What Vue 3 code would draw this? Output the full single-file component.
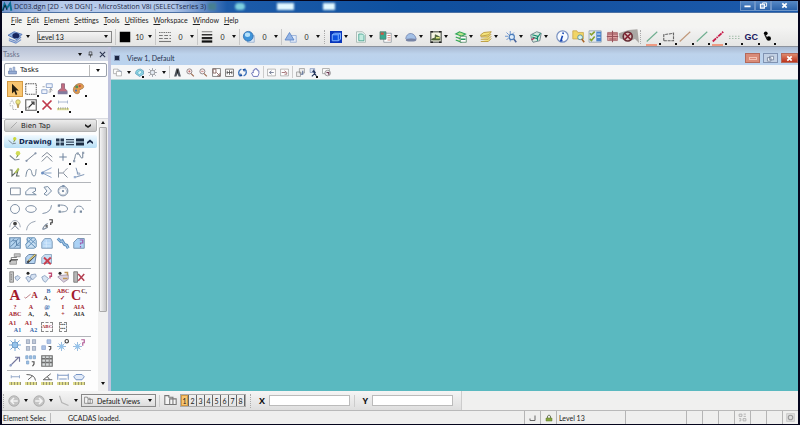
<script setup>
import { ref } from 'vue'

const menus = ['File', 'Edit', 'Element', 'Settings', 'Tools', 'Utilities', 'Workspace', 'Window', 'Help']

const icons = {
  app: '<path d="M1 14 4 3l4 7 5-8 2 12" fill="none" stroke="#0b6f93" stroke-width="3"/><path d="M1 14 5 5l3 8" fill="none" stroke="#123" stroke-width="1.5"/>',
  levels: '<path d="m0 6 7-4 9 3-6 6z" fill="#8fb2e4" stroke="#4b6cae"/><path d="m1 10 8 3 6-5M1 12l8 3 6-4" fill="none" stroke="#6f8fca" stroke-width="1.300"/><ellipse cx="9" cy="6.500" rx="4" ry="3" fill="#17255e"/>',
  black: '<path d="M1 1h14v14H1z" fill="#000"/>',
  dashes: '<path d="M0 2h16" stroke="#777" stroke-width="1.5" stroke-dasharray="2 1"/><path d="M0 6h16M0 10h16" stroke="#777" stroke-width="1.5" stroke-dasharray="5 2"/><path d="M0 14h16" stroke="#777" stroke-width="1.5"/>',
  weights: '<path d="M1 1h14" stroke="#555"/><path d="M1 5h14" stroke="#333" stroke-width="2"/><path d="M1 9.500h14" stroke="#222" stroke-width="3"/><path d="M1 14h14" stroke="#111" stroke-width="3"/>',
  sphere: '<path d="M6 6h9v9H6z" fill="#dbe7f5" stroke="#8fa9cb"/><circle cx="7" cy="7" r="6.500" fill="#3f94da" stroke="#2b68a9"/><ellipse cx="6" cy="5" rx="3.500" ry="3" fill="#b5e1fa"/>',
  prism: '<path d="M7 6h8v9H7z" fill="#e2ebf9" stroke="#8ba6d0"/><path d="m0 12 6-10 6 10z" fill="#93b4e6" stroke="#507cc1"/>',
  cube: '<path d="M0 0h16v16H0z" fill="#0835ba"/><path d="M3 5h8v8H3zM3 5l3-2h8v8l-3 2M11 5l3-2" fill="#0d51df" stroke="#83b5ff" stroke-width="1.300"/>',
  refs: '<path d="M2 1h8l4 4v10H2z" fill="#eef7f4" stroke="#9bada8"/><path d="M5 4h5l2 2v7H5z" fill="#c2ebdf" stroke="#389a86"/>',
  raster: '<path d="M5 3h10v12H5z" fill="#fff" stroke="#868f96"/><path d="M0 1h8v10H0z" fill="#3aa98e" stroke="#547b72"/><path d="M1 2h4v3H1z" fill="#d45542"/><path d="M10 6h4M10 9h4M10 12h4" stroke="#c46e5c"/>',
  cloud: '<path d="M1 10c1-8 10-9 13-2l1 3H2z" fill="#a3c0e6" stroke="#6d7fab"/><ellipse cx="8" cy="12" rx="7" ry="2" fill="#7784a5"/>',
  model: '<path d="M1 1h14v14H1z" fill="#f5f5e2" stroke="#777b76" stroke-width="2"/><path d="M1 1h3M12 1h3M1 15h3M12 15h3" stroke="#222" stroke-width="2"/><path d="m2 11 5-2V5l6 3v4H3z" fill="#58733a" stroke="#3a4d2e"/><path d="M8 8h5v2H8z" fill="#dbe582"/>',
  stackgreen: '<path d="m1 4 5-3 8 3-5 3zM1 8l7 3 6-3M1 12l7 3 6-3" fill="#b9e48c" stroke="#2ea55b" stroke-width="1.500"/><path d="M7 7h8v8H7z" fill="#fff" stroke="#447d5a"/><path d="M8 10h6v2H8z" fill="#259b5a"/>',
  stackyellow: '<path d="m1 5 4-3 10-1-3 4-11 2zM1 8h10l4-4M1 11h10l4-4M1 14h10l4-4" fill="#f4e37a" stroke="#b9993d" stroke-width="1.200"/>',
  sunzoom: '<path d="M7 0v4M7 10v4M0 7h4M2 2l3 3M12 2 9 5M2 12l3-3" stroke="#6f96cf" stroke-width="1.300"/><circle cx="9" cy="8" r="3.500" fill="#ddecfb" stroke="#4a7cba" stroke-width="1.500"/><path d="m12 11 3 4" stroke="#47639a" stroke-width="2"/>',
  book: '<path d="m1 5 8-4 6 2-2 10-9 2-2-4z" fill="#d7e9df" stroke="#536e77"/><path d="m3 5 7 2v6M3 8l6 2 5-7" fill="none" stroke="#168b6e" stroke-width="1.500"/><path d="m2 12 4-3" stroke="#ae385e" stroke-width="2"/>',
  info: '<circle cx="8" cy="8" r="7" fill="#f8fbff" stroke="#7b93c2" stroke-width="1.500"/><path d="m9 3-.5 2M8 7l-2 6h2" fill="none" stroke="#1644b2" stroke-width="2"/>',
  foldersearch: '<path d="M1 1h5l1 2h7v8H1z" fill="#f1d566" stroke="#c9a750"/><circle cx="10" cy="9" r="3" fill="#d6f0ef" stroke="#4a8b9e"/><path d="m12 11 3 4" stroke="#a96428" stroke-width="2"/>',
  check: '<path d="M0 1h15v14H0z" fill="#e3eaf1" stroke="#93a3b2"/><path d="M9 2h6v12H9z" fill="#4b84cd"/><path d="m1 4 2 2 4-4M1 11l2 2 4-5" fill="none" stroke="#89a231" stroke-width="2"/><path d="M10 5h4M10 9h4" stroke="#fff"/>',
  redplus: '<path d="M2 3h12v10H2z" fill="#dfa3a3" stroke="#a7676d"/><path d="M8 1v14M1 8h14M2 5h12M4 11h9" stroke="#98525b" stroke-width="1.300"/>',
  redx: '<path d="M-4 4 8 0l11-1 2 17-5-5-8 3-11-4z" fill="#aaa7a4"/><circle cx="7" cy="8" r="5.500" fill="#d9c1bd" stroke="#642e36" stroke-width="2"/><path d="m3 4 8 8M11 4l-8 8" stroke="#831f30" stroke-width="2"/>',
  lineg: '<path d="M1 14 15 1" stroke="#6fae90" stroke-width="1.500"/>',
  lineo: '<path d="M1 14 15 1" stroke="#c0987a" stroke-width="1.500"/>',
  quad: '<path d="M1 13V5l13-2v10z" fill="none" stroke="#666" stroke-width="1.500" stroke-dasharray="4 1"/>',
  linered: '<path d="M1 14 15 1" stroke="#c71e4b" stroke-width="2.500" stroke-dasharray="6 1 2 1"/>',
  dotted: '<path d="M0 7h16M0 10h16" stroke="#a3bda9" stroke-width="1.500" stroke-dasharray="2 2"/>',
  people: '<circle cx="5" cy="3" r="2.500"/><circle cx="9" cy="10" r="3"/><path d="m4 5 3 6" fill="none" stroke="#222" stroke-width="2"/>',
  cascade: '<path d="M1 2h8v8H1z" fill="#fff" stroke="#888"/><path d="M6 6h9v8H6z" fill="#fff" stroke="#888"/><path d="m10 3 5 4" stroke="#597aad"/>',
  globe: '<path d="M1 10c0-6 4-8 9-8l5 3v6l-7 4z" fill="#8fdbe8" stroke="#38779e"/><path d="m4 9 5-5 4 3-5 5z" fill="#d6f5f8" stroke="#3c91b0"/>',
  bright: '<path d="M8 0v16M0 8h16M2 2l12 12M14 2 2 14" stroke="#68717e"/><circle cx="8" cy="8" r="4" fill="#e4ebf3" stroke="#666"/>',
  brush: '<path d="M6 1h4l4 14h-4l-2-5-2 5H2z" fill="#4d535b"/><path d="M8 3v6" stroke="#222" stroke-width="2"/>',
  zoomin: '<circle cx="6" cy="6" r="4.500" fill="#f7efef" stroke="#857a7d" stroke-width="1.500"/><path d="M6 4v4M4 6h4" stroke="#a33c3c"/><path d="m9 10 5 5" stroke="#9b684c" stroke-width="2"/>',
  zoomout: '<circle cx="6" cy="6" r="4.500" fill="#f7efef" stroke="#857a7d" stroke-width="1.500"/><path d="M4 6h4" stroke="#a33c3c"/><path d="m9 10 5 5" stroke="#9b684c" stroke-width="2"/>',
  winarea: '<path d="M1 1h14v14H1z" fill="#fff" stroke="#777" stroke-width="1.500"/><path d="M2 2h5v7H2zM8 8l6 6M14 9v5H9" fill="none" stroke="#805d58" stroke-width="1.500"/>',
  fit: '<path d="M1 2h14v13H1z" fill="#fff" stroke="#666" stroke-width="1.500"/><path d="M3 8h10M8 4v8M4 5v6M12 5v6" stroke="#555" stroke-width="1.500"/>',
  rotate: '<path d="M6 2C0 4 0 11 4 14M10 14c6-2 6-9 2-12" fill="none" stroke="#3a73bd" stroke-width="2.500"/><path d="m5 9 3 5-5 1M11 7 8 2l5-1" fill="#164c9d"/>',
  hand: '<path d="M4 15 1 9l2-1 1 1V4h2V2h2V1h2v2h2v2h2v5l-2 5z" fill="#fff" stroke="#5c66b1" stroke-width="1.500"/>',
  prev: '<path d="M1 2h14v12H1z" fill="#fff" stroke="#888"/><path d="M12 8H5m3-3L4 8l4 3" fill="none" stroke="#6b7690" stroke-width="1.500"/>',
  next: '<path d="M1 2h14v12H1z" fill="#fff" stroke="#888"/><path d="M3 8h7M8 5l4 3v3H8" fill="none" stroke="#9b6568" stroke-width="1.500"/>',
  copyview: '<path d="M6 1h9v8H6zM1 7h7v8H1z" fill="#eee" stroke="#777"/><path d="M8 11h4V5" fill="none" stroke="#60729a" stroke-width="2"/>',
  walk: '<path d="M2 1h8v7H2z" fill="#dce5f5" stroke="#687fab"/><path d="m8 3 2 7-5 5M9 8l4 6M6 6l6 2" fill="none" stroke="#24375d" stroke-width="2"/>',
  clip: '<path d="M1 1h12v9H1z" fill="#fff" stroke="#777"/><circle cx="10" cy="9" r="5" fill="#ece6eb" stroke="#666"/><path d="M8 8h4v4" fill="none" stroke="#6a3650" stroke-width="2"/>',
  taskicon: '<path d="M1 9h14v5H1z" fill="#96add5" stroke="#4e679b"/><path d="M3 9V4h3v5M9 9V2h3v7" fill="#b9cbe8" stroke="#637dad"/>',
  cursor: '<path d="m4 1 9 9H9l2 5-2 1-2-5-3 3z" fill="#000"/>',
  fence: '<path d="M1 1h14v14H1z" fill="none" stroke="#333" stroke-width="1.300" stroke-dasharray="2 1"/>',
  manip: '<path d="M7 1h8v5H7zM1 9h7v5H1z" fill="#eef3fc" stroke="#6282b8"/><path d="M10 12h3V8m-2 2 2-3 2 3" fill="none" stroke="#777"/><path d="M2 5h3" stroke="#777"/>',
  stamp: '<path d="M6 1h4v6l3 3v4H2v-4l4-3z" fill="#b9546a" stroke="#743c59"/><path d="M1 11h13v4H1z" fill="#6d668e"/>',
  palette: '<path d="M7 1c7-2 10 6 4 7l-3 2c2 3-1 5-4 4C-2 12 0 3 7 1z" fill="#d98b31" stroke="#965726"/><circle cx="5" cy="5" r="2" fill="#387f3e"/><circle cx="9" cy="4" r="1.500" fill="#be2525"/><circle cx="4" cy="10" r="1.500" fill="#315cae"/>',
  modify: '<path d="m1 7 3-6 3 6M1 9h4v5h6" fill="none" stroke="#888" stroke-dasharray="2 1"/><path d="m10 6 1 6h2l1-6" fill="#ae8b42"/><circle cx="12" cy="4" r="3" fill="#ebe36d" stroke="#a4943a"/>',
  scale: '<path d="M1 1h14v14H1z" fill="#fff" stroke="#444" stroke-width="1.500"/><path d="m5 11 6-6M8 4h4v4" fill="none" stroke="#111" stroke-width="1.500"/><path d="M2 14v-3h3v3" fill="none" stroke="#777"/>',
  delete: '<path d="m2 2 12 12M14 2 2 14" stroke="#b5172d" stroke-width="2.300"/>',
  measure: '<path d="M2 4h12M2 2v4M14 2v4" stroke="#8297bb"/><path d="M0 12h16v3H0z" fill="#dedf8a"/><path d="M2 11v3M5 11v3M8 11v3M11 11v3M14 11v3" stroke="#777"/>',
  pen: '<path d="m14 2-11 11" stroke="#888"/>',
  smartline: '<path d="m1 6 7 6 6-1" fill="none" stroke="#687383" stroke-width="1.500"/><path d="m9 10 2-5 2 1z" fill="#59732c"/><circle cx="12" cy="3" r="3" fill="#cbd73a"/>',
  line: '<path d="M2 13 14 3" stroke="#627085" stroke-width="1.300"/><circle cx="2" cy="13" r="1.500" fill="#71829c"/><circle cx="14" cy="3" r="1.500" fill="#71829c"/>',
  multi: '<path d="m1 8 7-6 7 6M1 14l7-7 7 7" fill="none" stroke="#687383" stroke-width="1.300"/>',
  point: '<path d="M8 3v10M3 8h10" stroke="#536b8b" stroke-width="1.300"/>',
  curve: '<path d="M1 13C4 8 2 3 6 3s3 8 7 6V2" fill="none" stroke="#536982" stroke-width="1.300"/><path d="M0 12h3v3H0zM5 2h3v3H5zM12 1h3v3h-3z" fill="#8292a6"/>',
  freehand: '<path d="M1 4h3v8l8-8-2 8h4" fill="none" stroke="#3f4942" stroke-width="1.500"/><path d="m7 8 5-7 2 2-4 5z" fill="#a1b839"/>',
  wave: '<path d="M1 13C2 9 2 3 6 3s2 9 6 9c3 0 2-6 3-9" fill="none" stroke="#566d85" stroke-width="1.300"/>',
  bisect: '<path d="M2 7 14 1M2 8h12M2 8l12 6" fill="none" stroke="#7695be" stroke-width="1.300"/><circle cx="2" cy="8" r="2" fill="#567eb7"/>',
  minimum: '<path d="M2 2v12M2 8h6M14 2C10 5 8 7 9 9l5 5" fill="none" stroke="#6d7889" stroke-width="1.300"/>',
  perpendicular: '<path d="m4 1 3 10M2 14l13-4" stroke="#6682a7" stroke-width="1.300"/><path d="M5 8h4v3" fill="none" stroke="#6682a7"/><path d="M1 12h3v3H1z" fill="#8ca5cb"/>',
  rect: '<path d="M2 4h13v9H2z" fill="none" stroke="#69798e" stroke-width="1.300"/>',
  shape: '<path d="M1 13V9l5-5h8v4l-4 2 5 3z" fill="#f5f8fc" stroke="#607792" stroke-width="1.300"/>',
  ortho: '<path d="m4 3 5-1 5 6-6 6-4-2 4-4z" fill="#f3f7fb" stroke="#607792" stroke-width="1.300"/>',
  polygon: '<circle cx="8" cy="8" r="6.500" fill="none" stroke="#59718e" stroke-width="1.300"/><path d="M5 4h6l2 4-2 5H5L2 8z" fill="none" stroke="#9aaabd"/><circle cx="8" cy="8" r="1.500" fill="#59718e"/><path d="M7 0h3v3H7z" fill="#6a82a0"/>',
  circle: '<circle cx="8" cy="8" r="6" fill="none" stroke="#687b94" stroke-width="1.300"/>',
  ellipse: '<ellipse cx="8" cy="8" rx="7" ry="4.500" fill="none" stroke="#687b94" stroke-width="1.300"/>',
  arc: '<path d="M2 14Q13 13 14 3" fill="none" stroke="#687b94" stroke-width="1.300"/>',
  half: '<path d="M2 3c7-1 12 1 12 5 0 3-4 4-10 4" fill="none" stroke="#647890" stroke-width="1.300"/><path d="M1 2h3v3H1zM2 10h3v3H2z" fill="#647890"/>',
  arc2: '<path d="M2 12C2 2 12 2 14 9" fill="none" stroke="#647890" stroke-width="1.300"/><circle cx="2" cy="12" r="1.500" fill="#7e90a7"/><path d="M9 10h3v3H9z" fill="#647890"/>',
  arcmod: '<path d="M1 11C2-1 14-1 15 11" fill="none" stroke="#8490a2" stroke-width="1.200"/><path d="m3 14 5-5 5 5" fill="none" stroke="#526177" stroke-width="1.300"/><circle cx="8" cy="6" r="2.500" fill="#222"/>',
  arc3: '<path d="M2 15Q3 5 14 3" fill="none" stroke="#8793a3" stroke-width="1.300"/>',
  arcaxis: '<path d="M2 14Q4 8 9 6M3 14l6-3" fill="none" stroke="#67778d" stroke-width="1.500"/><path d="M6 8h3v3H6z" fill="#555"/><path d="M11 1h4v4h-2v3" fill="none" stroke="#222" stroke-width="1.600"/>',
  hatch: '<path d="M1 1h14v14H1z" fill="#a8ccec" stroke="#4d769f" stroke-width="1.500"/><path d="m2 13 11-11M2 7l5-5M7 14l7-7M5 5h5v6h4" fill="none" stroke="#42719f" stroke-width="1.300"/>',
  crosshatch: '<path d="M3 1h10l2 4v8l-3 2H2l-1-5 2-3z" fill="#c0dcf2" stroke="#5584ad" stroke-width="1.300"/><path d="m2 3 12 11M5 1l9 8M1 10 10 1M3 14 14 3" stroke="#447aae" stroke-width="1.300"/>',
  pattern: '<path d="M1 15V7l4-5h8l2 4v9z" fill="#a9d0f4" stroke="#7190b0" stroke-width="1.300"/><path d="M3 12h10M4 8h9M7 4v10" stroke="#d7ecff"/>',
  linear: '<path d="m1 2 4 4 2-1 3 5 3 1 2 4" fill="none" stroke="#447fb8" stroke-width="4"/><path d="m1 2 4 4 2-1 3 5 3 1 2 4" fill="none" stroke="#c2e0f5"/>',
  matchpat: '<path d="M1 15V7l5-5h9v13z" fill="#9dcbf4" stroke="#6384a5" stroke-width="1.300"/><path d="M9 4h4v4h-3v2M10 12v2" fill="none" stroke="#8e3c9b" stroke-width="1.600"/>',
  changepat: '<path d="M1 10h9v5H1zM7 1h8v4H7z" fill="#bdbdbd" stroke="#777"/><path d="M3 9V6h7V5" fill="none" stroke="#444"/><path d="M1 12 3 9h9" fill="none" stroke="#111" stroke-width="1.500"/>',
  editpat: '<path d="M1 14V6l4-4h10l-2 12z" fill="#a9cdf0" stroke="#4d6d94" stroke-width="1.300"/><path d="M3 13 14 2" stroke="#222" stroke-width="3"/><path d="m5 10 9-8" stroke="#e8d36c" stroke-width="1.500"/>',
  delpat: '<path d="M1 14V6l4-4h9v12z" fill="#bddaf3" stroke="#6485a7"/><path d="m4 6 9 9M13 6 4 15" stroke="#c01f31" stroke-width="2.500"/>',
  tags: '<path d="M1 1h5v14H1z" fill="#b9b9b9" stroke="#5d5d5d"/><path d="M3 4v9" stroke="#555" stroke-dasharray="2 1"/><path d="m8 8 4-2 3 3-4 4-2-2z" fill="#cad9ed" stroke="#6680a6"/>',
  attach: '<path d="m1 9 3-2 5 3-4 5zM8 5l6-1 1 3-5 5-3-3z" fill="#cfddf0" stroke="#6480a8"/><circle cx="4" cy="3" r="2"/>',
  tagq: '<path d="m1 8 4-2 5 4-4 5-3-2z" fill="#d2e1f2" stroke="#6480a8"/><path d="M10 3h4v4h-2v3" fill="none" stroke="#b42d5c" stroke-width="1.700"/>',
  tagmod: '<path d="m1 8 3-2 11-1v6l-6 4z" fill="#d3cad9" stroke="#85728f"/><circle cx="4" cy="3" r="2"/><path d="M10 2h4v4M8 10h6" fill="none" stroke="#b5833f" stroke-width="2"/>',
  tagdel: '<path d="M1 1h5v14H1z" fill="#aaa" stroke="#4d4d4d"/><path d="m7 4 8 9M15 4 7 13" stroke="#a71f35" stroke-width="2"/>',
  note: '<path d="m1 12 3 2 11-9" fill="none" stroke="#8b2330" stroke-width="1.500"/>',
  star: '<path d="M8 0v16M0 8h16M2 2l12 12M14 2 2 14" stroke="#6099d0" stroke-width="1.300"/><circle cx="8" cy="8" r="4" fill="#83b9e8" stroke="#457eb5"/>',
  cells: '<path d="M2 1h4v5H2zM10 1h4v5h-4zM2 10h4v5H2zM10 10h4v5h-4z" fill="#b8c2d3" stroke="#97a4bb" stroke-width="1.500"/>',
  cellpick: '<path d="M8 1h5v5H8zM1 9h5v5H1z" fill="#9eb9e3" stroke="#7c99ca"/><path d="M10 10h3v3l-2 2" fill="none" stroke="#333" stroke-width="1.600"/>',
  starzero: '<path d="M6 4v12M0 10h12M2 6l8 8M10 6l-8 8" stroke="#6299ce"/><circle cx="6" cy="10" r="3" fill="#83b9e8"/><circle cx="13" cy="3" r="2.300" fill="none" stroke="#222" stroke-width="1.500"/>',
  starq: '<path d="M6 4v12M0 10h12M2 6l8 8M10 6l-8 8" stroke="#6299ce"/><circle cx="6" cy="10" r="3" fill="#83b9e8"/><path d="M11 1h4v4h-2v4" fill="none" stroke="#a44186" stroke-width="1.600"/>',
  arrow: '<path d="M1 15 13 3M8 3h6v6" fill="none" stroke="#5c5f8c" stroke-width="1.500"/><path d="M1 12h3v3H1z" fill="#7d8fbd"/>',
  cellmulti: '<path d="M1 1h3v4H1zM6 1h3v4H6zM11 1h3v4h-3zM2 8h3v4H2z" fill="#88b6e3" stroke="#6b94c2"/><path d="M9 9h3v3l-2 3" fill="none" stroke="#333" stroke-width="1.600"/>',
  table: '<path d="M1 1h14v14H1z" fill="#d3d8d9" stroke="#555" stroke-width="1.500"/><path d="M1 5h14M1 10h14" stroke="#555" stroke-width="2"/><path d="M6 1v14M11 1v14" stroke="#777" stroke-width="1.500"/>',
  mdist: '<path d="M3 5h11M3 3v4M14 3v4" stroke="#8299bf" stroke-width="1.300"/>',
  mrad: '<path d="M2 2q11 0 12 8M4 9l6-5" fill="none" stroke="#444" stroke-width="1.300"/>',
  mang: '<path d="M13 1 3 9h12M8 5q3 1 3 4" fill="none" stroke="#444" stroke-width="1.300"/>',
  mlen: '<path d="M1 1v8M15 1v8M1 3h14M3 8h10" stroke="#6585b9" stroke-width="1.300"/>',
  marea: '<path d="M4 2h8l3 3-3 4H4L1 5z" fill="#dfe9f8" stroke="#5b7fb9" stroke-width="1.300"/>',
  back: '<circle cx="8" cy="8" r="7" fill="#c4c4c4" stroke="#a3a3a3"/><path d="M13 8H4m4-4L4 8l4 4" fill="none" stroke="#f4f4f4" stroke-width="2"/>',
  forward: '<circle cx="8" cy="8" r="7" fill="#c4c4c4" stroke="#a3a3a3"/><path d="M3 8h9M8 4l4 4-4 4" fill="none" stroke="#f4f4f4" stroke-width="2"/>',
  polyline: '<path d="m2 1 3 9 9 4" fill="none" stroke="#b4b4b4" stroke-width="1.500"/>',
  viewgroup: '<path d="M1 2h5v2h5v9H1zM7 6h8v7H7z" fill="#f5f5f5" stroke="#777" stroke-width="1.300"/>',
  snap: '<path d="M2 13h10V3M2 9v4" fill="none" stroke="#666" stroke-width="2"/>',
  lock: '<path d="M5 8V4q3-4 6 0v4" fill="none" stroke="#757d66" stroke-width="2"/><path d="M2 8h12v6H2z" fill="#85a73f" stroke="#5d712f"/>',
  grid: '<path d="M2 2h5v4H2zM10 2h4M10 6h4M2 10h3v4H2M9 10h5v4H9z" fill="none" stroke="#aaa" stroke-width="1.500"/>',
  globebox: '<path d="M1 1h14v14H1z" fill="#ddd" stroke="#bbb"/><circle cx="8" cy="8" r="4" fill="none" stroke="#999" stroke-width="2"/>',
  pin: '<path d="M5 2h6v7H5zM3 9h10M8 9v6" fill="none" stroke="#333" stroke-width="1.500"/>',
  x: '<path d="m2 2 12 12M14 2 2 14" stroke="#2c3550" stroke-width="2.500"/>',
  xw: '<path d="m3 3 10 10M13 3 3 13" stroke="#fff" stroke-width="4"/>',
  min: '<path d="M1 10h14" stroke="#fff" stroke-width="4"/>',
  restore: '<path d="M6 2h9v8H6z" fill="none" stroke="#fff" stroke-width="2"/><path d="M1 5h9v9H1z" fill="#82a6d2" stroke="#fff" stroke-width="2.500"/>',
  viewrestore: '<path d="M6 3h9v8H6zM1 6h8v8H1z" fill="#eef3f9" stroke="#5e6d88" stroke-width="1.500"/>',
  chevdown: '<path d="m2 4 6 4 6-4v4l-6 4-6-4z" fill="#222"/>',
  chevup: '<path d="m2 12 6-4 6 4V8L8 3 2 8z" fill="#152544"/>',
  lay1: '<path d="M0 1h7v6H0zM9 1h7v6H9zM0 9h7v6H0zM9 9h7v6H9z" fill="#263850"/>',
  lay2: '<path d="M0 3h16M0 8h16M0 13h16" stroke="#34465c" stroke-width="2.500"/>',
  lay3: '<path d="M0 1h16v6H0zM0 9h16v6H0z" fill="#1a2c43"/>',
}

const attributes = [
  { icon: 'black', value: '10', label: 'Active color' },
  { icon: 'dashes', value: '0', label: 'Active line style' },
  { icon: 'weights', value: '0', label: 'Active line weight' },
  { icon: 'sphere', value: '0', label: 'Active transparency' },
  { icon: 'prism', value: '0', label: 'Active priority' },
]
const primary = ['cube', 'refs', 'raster', 'cloud', 'model', 'stackgreen', 'stackyellow', 'sunzoom', 'book']
const secondary = ['info', 'foldersearch', 'check', 'redplus', 'redx']
const gcadas = [
  { icon: 'lineg', hot: true }, { icon: 'quad' }, { icon: 'lineo' }, { icon: 'lineg' },
  { icon: 'linered', hot: true }, { icon: 'dotted' }, { text: 'GC' }, { icon: 'people' },
]
const viewTools = [
  ['cascade', 'drop'], ['globe', 'corner'], ['bright', 'drop'], ['|'],
  ['brush'], ['zoomin'], ['zoomout'], ['winarea'], ['fit'], ['rotate'], ['hand'], ['|'],
  ['prev'], ['next'], ['|'], ['copyview'], ['walk', 'corner'], ['clip'],
]
const mainTools = [
  'cursor', 'fence', 'manip', 'stamp', 'palette',
  'modify', 'scale', 'delete', 'measure',
]
const plainMain = ['cursor', 'delete']

// A tool is either an icon name or a short piece of lettering: [top line, bottom line, style].
const groups = [
  ['smartline', 'line', 'multi', 'point', 'curve', 'freehand', 'wave', 'bisect', 'minimum', 'perpendicular'],
  ['rect', 'shape', 'ortho', 'polygon'],
  ['circle', 'ellipse', 'arc', 'half', 'arc2', 'arcmod', 'arc3', 'arcaxis'],
  ['hatch', 'crosshatch', 'pattern', 'linear', 'matchpat', 'changepat', 'editpat', 'delpat'],
  ['tags', 'attach', 'tagq', 'tagmod', 'tagdel'],
  [
    ['A', '', 'big'], ['', 'A', 'note'], ['B', 'A ,', 'blue'], ['ABC', '✓', 'red'], ['C', 'C,', 'big pair'],
    ['?', 'ABC', 'red'], ['A', 'A,', 'mix'], ['@', 'A,', 'blue'], ['I', '+', 'red'], ['AIA', 'AIA', 'mix'],
    ['A1', 'A1', 'step'], ['A1', 'A2', 'step'], ['ABC', '', 'field'], ['▪▪▪', '▪▪▪', 'field dark'],
  ],
  ['star', 'cells', 'cellpick', 'starzero', 'starq', 'arrow', 'cellmulti', 'table'],
  ['mdist', 'mrad', 'mang', 'mlen', 'marea'],
]
const cornered = ['point', 'curve']
const activeView = ref(1)
const x = ref('')
const y = ref('')
const cells = ['', '', '', 'grid', '', '', 'globebox']
</script>

<template>
  <div class="app">
    <header class="title">
      <svg class="ico s10" viewBox="0 0 16 16" v-html="icons.app" />
      <h1>DC03.dgn [2D - V8 DGN] - MicroStation V8i (SELECTseries 3)</h1>
      <div class="glow"><i class="g1" /><i class="g2" /><i class="g3" /><i class="g4" /></div>
      <div class="winbtns">
        <button v-for="b in ['min', 'restore', 'xw']" :key="b" :aria-label="b">
          <svg class="ico s7" viewBox="0 0 16 16" v-html="icons[b]" />
        </button>
      </div>
    </header>

    <nav class="menu">
      <a v-for="m in menus" :key="m" href="#"><u>{{ m[0] }}</u>{{ m.slice(1) }}</a>
    </nav>

    <div class="toolbar">
      <button class="tool lead" aria-label="Levels"><svg class="ico s14" viewBox="0 0 16 16" v-html="icons.levels" /></button>
      <i class="tri" />
      <div class="combo level">
        <select aria-label="Active level"><option>Level 13</option></select><i class="tri" />
      </div>
      <button v-for="a in attributes" :key="a.icon" class="attr" :aria-label="a.label">
        <svg class="ico s12" viewBox="0 0 16 16" v-html="icons[a.icon]" /><span>{{ a.value }}</span><i class="tri" />
      </button>
      <i class="grip" />
      <button v-for="p in primary" :key="p" class="prim" :aria-label="p">
        <svg class="ico s12" viewBox="0 0 16 16" v-html="icons[p]" /><i class="tri" />
      </button>
      <div class="even five">
        <button v-for="s in secondary" :key="s" class="tool" :aria-label="s">
          <svg class="ico s13" viewBox="0 0 16 16" v-html="icons[s]" />
        </button>
      </div>
      <i class="grip" />
      <div class="even eight">
        <button v-for="(g, i) in gcadas" :key="i" class="tool corner" :class="{ hot: g.hot }" :aria-label="g.icon || g.text">
          <b v-if="g.text" class="gc">{{ g.text }}</b>
          <svg v-else class="ico s12" viewBox="0 0 16 16" v-html="icons[g.icon]" />
        </button>
      </div>
    </div>

    <main class="work">
      <aside class="tasks">
        <div class="tasktitle">
          <span>Tasks</span><i class="tri" />
          <button aria-label="Pin"><svg class="ico s7" viewBox="0 0 16 16" v-html="icons.pin" /></button>
          <button aria-label="Close"><svg class="ico s7" viewBox="0 0 16 16" v-html="icons.x" /></button>
        </div>
        <div class="combo taskcombo">
          <svg class="ico s9" viewBox="0 0 16 16" v-html="icons.taskicon" />
          <select aria-label="Task"><option>Tasks</option></select>
          <i class="split" /><i class="tri" />
        </div>
        <div class="palette main">
          <button v-for="t in mainTools" :key="t" class="tool" :class="{ on: t === 'cursor', corner: !plainMain.includes(t) }" :aria-label="t">
            <svg class="ico s12" viewBox="0 0 16 16" v-html="icons[t]" />
          </button>
        </div>
        <div class="scroller">
          <div class="lists">
            <button class="head"><svg class="ico s9" viewBox="0 0 16 16" v-html="icons.pen" /><span>Bien Tap</span><svg class="ico s8" viewBox="0 0 16 16" v-html="icons.chevdown" /></button>
            <div class="head open">
              <svg class="ico s9" viewBox="0 0 16 16" v-html="icons.smartline" /><span>Drawing</span>
              <button v-for="l in ['lay1', 'lay2', 'lay3', 'chevup']" :key="l" :aria-label="l"><svg class="ico s8" viewBox="0 0 16 16" v-html="icons[l]" /></button>
            </div>
            <div v-for="(g, gi) in groups" :key="gi" class="palette" :class="{ measure: gi === 7 }">
              <button v-for="(t, ti) in g" :key="ti" class="tool" :class="{ corner: cornered.includes(t) }" :aria-label="typeof t === 'string' ? t : 'Text ' + (ti + 1)">
                <svg v-if="typeof t === 'string'" class="ico s12" viewBox="0 0 16 16" v-html="icons[t]" />
                <span v-else class="glyph" :class="t[2]">
                  <svg v-if="t[2] === 'note'" class="ico s7" viewBox="0 0 16 16" v-html="icons.note" />
                  <em v-if="t[0]">{{ t[0] }}</em><em v-if="t[1]">{{ t[1] }}</em>
                </span>
              </button>
            </div>
          </div>
          <div class="scroll"><i class="tri up" /><i class="thumb" /><i class="tri" /></div>
        </div>
      </aside>

      <section class="view">
        <div class="viewtitle">
          <i class="dot" /><h2>View 1, Default</h2>
          <button class="red" aria-label="Minimize view"><i /></button>
          <button aria-label="Restore view"><svg class="ico s7" viewBox="0 0 16 16" v-html="icons.viewrestore" /></button>
          <button class="red strong" aria-label="Close view"><svg class="ico s7" viewBox="0 0 16 16" v-html="icons.xw" /></button>
        </div>
        <div class="viewbar">
          <template v-for="(v, i) in viewTools" :key="i">
            <i v-if="v[0] === '|'" class="sep" />
            <button v-else class="tool" :class="v[1]" :aria-label="v[0]">
              <svg class="ico s9" viewBox="0 0 16 16" v-html="icons[v[0]]" /><i v-if="v[1] === 'drop'" class="tri" />
            </button>
          </template>
        </div>
        <div class="canvas" />
      </section>
    </main>

    <div class="bottom">
      <div class="dock">
        <i class="grip" />
        <button v-for="n in ['back', 'forward', 'polyline']" :key="n" class="nav" :aria-label="n">
          <svg class="ico s12" viewBox="0 0 16 16" v-html="icons[n]" /><i class="tri" />
        </button>
        <div class="combo views">
          <svg class="ico s9" viewBox="0 0 16 16" v-html="icons.viewgroup" />
          <select aria-label="View group"><option>Default Views</option></select><i class="tri" />
        </div>
        <i class="sep" />
        <button class="tool group" aria-label="View groups"><svg class="ico s13" viewBox="0 0 16 16" v-html="icons.viewgroup" /></button>
        <div class="nums">
          <button v-for="n in 8" :key="n" :class="{ on: n === activeView }" @click="activeView = n">{{ n }}</button>
        </div>
        <i class="grip" />
        <label class="coord">X<input v-model="x" type="text"></label>
        <i class="sep" />
        <label class="coord">Y<input v-model="y" type="text"></label>
      </div>
    </div>

    <footer class="status">
      <span class="first">Element Selec</span>
      <span class="msg">GCADAS loaded.</span>
      <span class="cell"><svg class="ico s8" viewBox="0 0 16 16" v-html="icons.snap" /></span>
      <span class="cell"><svg class="ico s8" viewBox="0 0 16 16" v-html="icons.lock" /></span>
      <span class="cell lvl">Level 13</span>
      <span class="cell wide" />
      <span v-for="(c, i) in cells" :key="i" class="cell"><svg v-if="c" class="ico s9" viewBox="0 0 16 16" v-html="icons[c]" /></span>
    </footer>
  </div>
</template>

<style>
html, body { height: 100%; }
body { background: #000; overflow: hidden; }
#app { height: 100%; }
</style>

<style scoped>
* { box-sizing: border-box; }
.app {
  height: 100vh; display: flex; flex-direction: column; border: 1px solid #05051c; border-right-width: 2px; border-left-width: 2px;
  background: #f0f0f0; color: #222; font: 7px/10px Lato, "Open Sans", sans-serif; overflow: hidden;
}
button { border: 0; padding: 0; margin: 0; background: none; font: inherit; color: inherit; display: flex; align-items: center; justify-content: center; }
.ico { display: block; flex: none; overflow: visible; }
.s7 { width: 7px; height: 7px; } .s8 { width: 8px; height: 8px; } .s9 { width: 9px; height: 9px; } .s10 { width: 10px; height: 10px; }
.s12 { width: 12px; height: 12px; } .s13 { width: 13px; height: 13px; } .s14 { width: 14px; height: 14px; }
.tri { flex: none; width: 0; height: 0; border: 2px solid transparent; border-top: 3px solid #111; border-bottom: 0; }
.tri.up { border-top: 0; border-bottom: 3px solid #111; }
.grip { flex: none; width: 1px; height: 14px; border-left: 1px dotted #aaa; }
.sep { flex: none; width: 1px; height: 12px; background: #ccc; }
.tool { position: relative; }
.corner::after { content: ""; position: absolute; right: 0; bottom: 0; width: 2px; height: 2px; background: #111; }

.title { flex: none; height: 12px; display: flex; align-items: center; gap: 2px; background: linear-gradient(90deg, #7796cd 0, #b9cceb 60px, #b3c8e9 170px, #5a85c3 205px, #1d5ba9 225px, #0e51a0 400px, #124f9e 60%, #1c5aab 100%); border-bottom: 1px solid #4c71a4; }
h1 { margin: 0; font: 7px/11px "Open Sans", sans-serif; color: #1c2948; white-space: nowrap; }
.glow { flex: 1; height: 10px; display: flex; align-items: center; }
.glow i { height: 7px; filter: blur(1px); background: #e1f8ff; }
.glow .g1 { width: 8px; background: #467f91; }
.glow .g2 { width: 10px; margin-left: 19px; border-radius: 5px; background: #7ed1df; }
.glow .g3 { width: 17px; margin-left: 32px; }
.glow .g4 { width: 12px; margin-left: 29px; }
.winbtns { display: grid; grid-template-columns: 15px 16px 27px; height: 10px; align-self: flex-start; }
.winbtns button { background: linear-gradient(#5789c5, #2b62a9); border: 1px solid #6d95c8; border-top: 0; }

.menu { flex: none; height: 14px; display: flex; align-items: center; gap: 5px; padding-left: 9px; background: #f4f4f2; }
.menu a { color: #222; text-decoration: none; }
.menu u { text-decoration-thickness: 1px; text-underline-offset: 1px; }

.toolbar { flex: none; height: 20px; display: flex; align-items: center; background: linear-gradient(#f4f4f3, #e5e5e4); border-bottom: 1px solid #8c939e; }
.lead { width: 24px; padding-left: 2px; }
.combo { display: flex; align-items: center; border: 1px solid #888; background: linear-gradient(#f4f4f4, #ddd); padding-right: 3px; }
.combo select { appearance: none; flex: 1; min-width: 0; border: 0; margin: 0; padding: 0; background: none; font: inherit; color: #111; }
.level { width: 75px; height: 12px; margin: 0 3px 0 7px; }
.attr { width: 42px; height: 16px; padding: 0 3px; justify-content: space-between; border-left: 1px solid #c8c8c8; }
.level + .attr { width: 40px; }
.toolbar > .grip { margin: 0 1px; }
.prim { width: 25px; height: 16px; justify-content: space-between; padding: 0 3px 0 4px; }
.even { display: grid; grid-auto-flow: column; grid-auto-columns: 1fr; }
.five { width: 83px; margin: 0 2px 0 3px; } .eight { width: 132px; margin-left: 2px; }
.even .tool { height: 17px; }
.hot::before { content: ""; position: absolute; left: 2px; right: 4px; bottom: -1px; height: 2px; background: #ee9b83; }
.gc { font: bold 9px/12px "Liberation Sans", sans-serif; color: #17175e; }

.work { flex: 1; min-height: 0; display: flex; }
.tasks { flex: none; width: 106px; display: flex; flex-direction: column; background: #fdfdfd; }
.tasktitle { flex: none; height: 14px; display: flex; align-items: center; gap: 5px; padding: 0 2px 0 1px; background: linear-gradient(#b8c2d6, #d6dce8); color: #68718a; }
.tasktitle span { flex: 1; }
.taskcombo { flex: none; height: 14px; margin: 2px 1px 3px 2px; padding: 0 6px 0 3px; gap: 3px; background: #fff; border-color: #9ba1ac; border-radius: 2px; }
.taskcombo, .head { font: 7px/10px "DejaVu Sans", sans-serif; }
.split { width: 1px; height: 11px; margin-right: 3px; background: #bbb; }
.palette { display: grid; grid-template-columns: repeat(5, 16px); grid-auto-rows: 16px; padding-bottom: 1px; border-bottom: 1px solid #b2b5ba; margin: 0 6px 0 3px; }
.palette.main { flex: none; margin: 0 0 0 5px; padding: 1px 0 5px; border: 0; }
.on { background: #f8c570; box-shadow: inset 0 0 0 1px #d39943; }
.scroller { flex: 1; min-height: 0; display: flex; border-top: 1px solid #d9dbe0; }
.lists { flex: 1; min-width: 0; overflow: hidden; padding: 0 1px 0 2px; }
.palette .ico { opacity: .85; }
.head { width: 100%; height: 13px; margin: 0 0 3px; padding: 0 4px; display: flex; align-items: center; gap: 3px; text-align: left; background: linear-gradient(#ececec, #c4c4c4); border: 1px solid #b1b1b1; border-radius: 2px; }
.head span { flex: 1; }
.head.open { margin-bottom: 1px; padding-right: 3px; background: linear-gradient(#f2faff, #b7def5); border: 0; font-weight: bold; color: #10264f; gap: 2px; }
.palette.measure { border: 0; }
.measure .tool::after { content: ""; position: absolute; left: 2px; right: 2px; bottom: 2px; height: 3px; background: repeating-linear-gradient(90deg, #dedb8c 0 2px, #99976f 2px 3px); }
.glyph { display: flex; flex-direction: column; align-items: center; font: bold 6px/7px "Liberation Serif", serif; color: #a31c2d; }
.glyph em { font-style: normal; }
.big { font-size: 15px; line-height: 15px; }
.pair { flex-direction: row; align-items: flex-start; font-size: 14px; }
.pair em:last-child { font-size: 6px; line-height: 7px; color: #5a1d28; }
.note { flex-direction: row; font-size: 9px; }
.blue em:first-child { color: #4470b1; align-self: flex-end; }
.blue em:last-child, .mix em:last-child { color: #333; }
.step em:first-child { align-self: flex-start; }
.step em:last-child { color: #3267aa; padding-left: 5px; }
.field { border: 1px dashed #888; font-size: 5px; line-height: 8px; }
.dark { color: #555; line-height: 4px; }
.scroll { flex: none; width: 10px; display: flex; flex-direction: column; align-items: center; padding: 2px 0 6px; background: #f0f0f0; justify-content: space-between; }
.thumb { width: 8px; height: 70%; margin: 3px 0 auto; border: 1px solid #aaa; border-radius: 1px; background: linear-gradient(90deg, #f4f4f4, #c8c8ca); }

.view { flex: 1; min-width: 0; display: flex; flex-direction: column; border-left: 3px solid #bfc3dd; }
.viewtitle { flex: none; height: 18px; display: flex; align-items: center; gap: 3px; padding: 4px 0 0 3px; background: linear-gradient(#a9b9d1, #bdd3ec 7px, #b9d2ee); }
.dot { width: 6px; height: 6px; margin-right: 4px; border: 1px solid #8a9cbc; background: #1c2743; }
h2 { flex: 1; margin: 0; font: 7px/10px Lato, sans-serif; color: #26324c; }
.viewtitle button { width: 15px; height: 10px; border: 1px solid #8092b1; background: #c3d1e4; }
.viewtitle .red { background: #d98b78; border-color: #b3695a; }
.red i { width: 8px; height: 3px; border: 1px solid #f2c3b5; }
.viewtitle .strong { width: 17px; background: linear-gradient(#e08a6d, #bc321c); }
.viewbar { flex: none; height: 15px; display: flex; align-items: center; gap: 4px; padding: 0 2px; background: #f5f6f7; border-bottom: 1px solid #b6d6d8; }
.viewbar .tool { height: 12px; }
.viewbar .drop { gap: 5px; }
.viewbar .sep { margin: 0 -1px; }
.canvas { flex: 1; background: #5ab9c0; }

.bottom { flex: none; height: 20px; background: #f0f0ef; border-bottom: 1px solid #b9b9b9; }
.dock { width: 460px; height: 19px; display: flex; align-items: center; padding-left: 1px; background: linear-gradient(#f5f5f5, #dedede); border-right: 1px solid #ccc; }
.nav { flex: none; width: 25px; padding: 0 1px 0 4px; justify-content: space-between; }
.views { flex: none; width: 75px; height: 13px; margin: 0 3px 0 2px; padding-left: 2px; gap: 4px; }
.group { flex: none; width: 20px; }
.nums { flex: none; display: grid; grid-template-columns: repeat(8, 1fr); width: 66px; margin: 0 4px 0 0; border: 1px solid #aaa; }
.nums button { height: 11px; border-right: 1px solid #666; }
.coord { display: flex; align-items: center; flex: 1; min-width: 0; gap: 4px; padding: 0 4px 0 8px; font: bold 9px/12px "Open Sans", sans-serif; color: #111; }
.coord:last-child { padding-right: 8px; }
.coord input { flex: 1; min-width: 0; height: 11px; padding: 0 2px; border: 1px solid #bbb; background: #fff; font: 7px "Open Sans", sans-serif; }

.status { flex: none; height: 13px; display: flex; align-items: center; background: #efefee; }
.first { width: 49px; padding-left: 1px; border-right: 1px solid #bbb; white-space: nowrap; }
.msg { flex: 1; padding-left: 17px; }
.cell { width: 16px; height: 13px; display: flex; align-items: center; justify-content: center; border-left: 1px solid #b5b5b5; }
.lvl { width: 69px; justify-content: flex-start; padding-left: 2px; }
.wide { width: 61px; }
</style>
